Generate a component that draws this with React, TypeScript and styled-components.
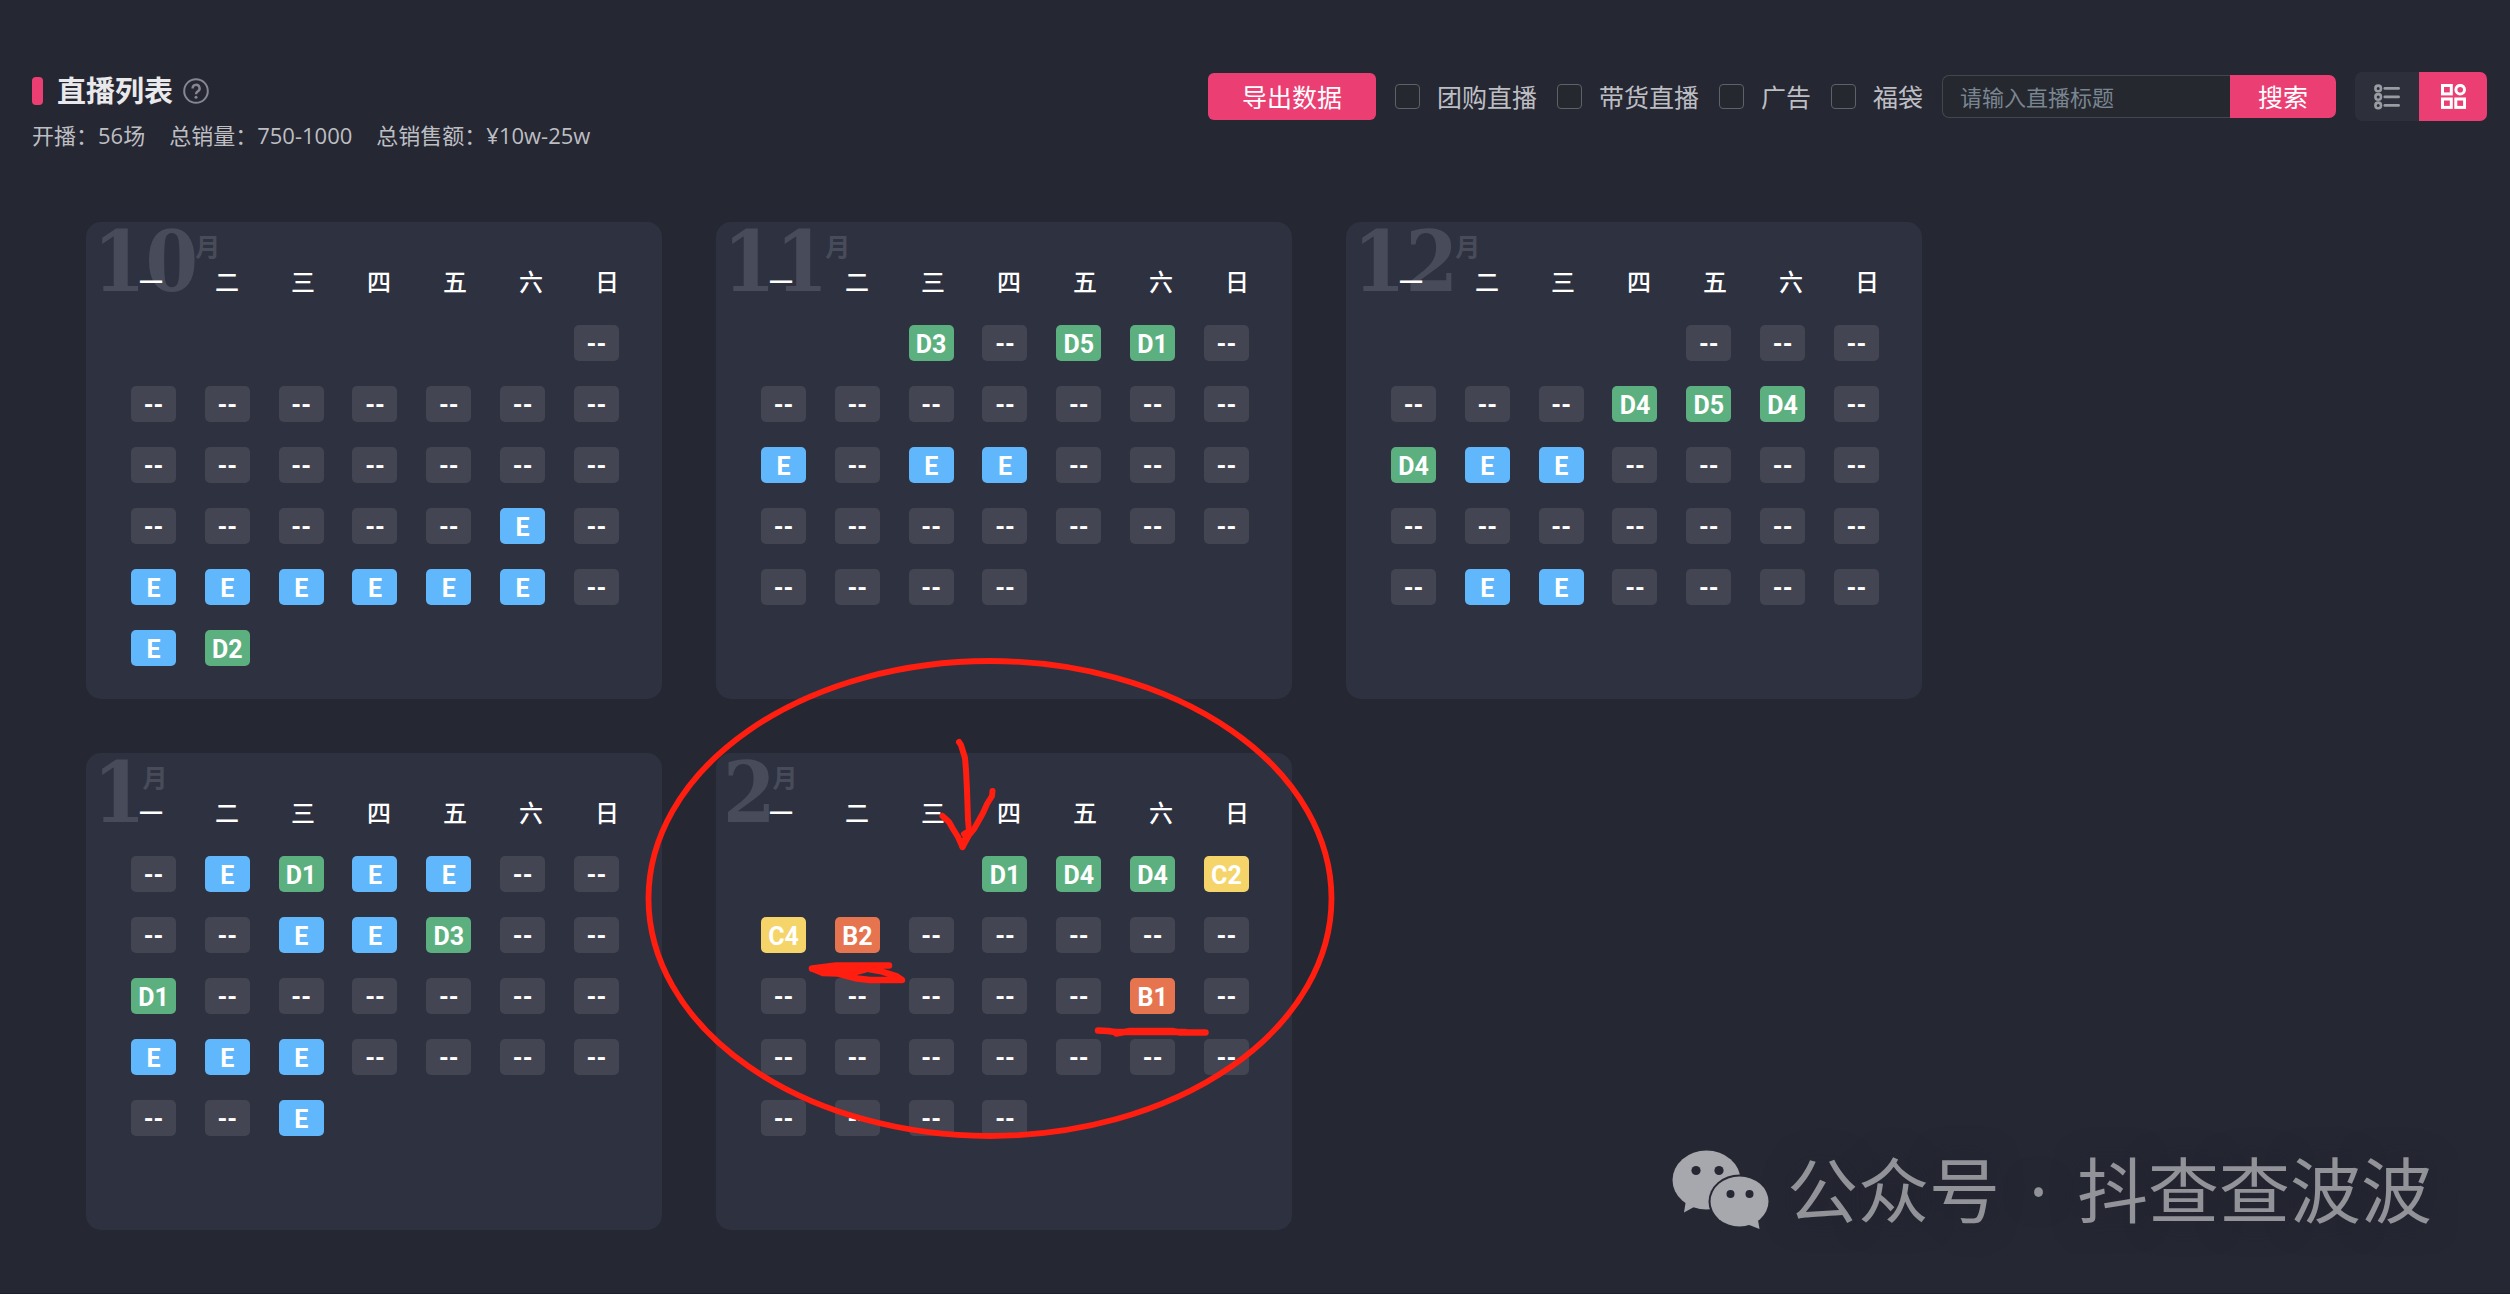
import React from "react";
import styled, { createGlobalStyle } from "styled-components";

const GlobalStyle = createGlobalStyle`
  * { box-sizing: border-box; }
  body {
    margin: 0;
    background: #252733;
    color: #bdbec2;
    font-family: "Open Sans", "Noto Sans CJK SC", sans-serif;
  }
  button, input { font-family: inherit; }
`;

const Page = styled.main`
  position: relative;
  min-height: 100vh;
  padding: 72px 23px 48px 32px;
  border-bottom: 1px solid #1f1f2a;
`;

const Header = styled.header`
  display: flex;
  justify-content: space-between;
  align-items: flex-start;
`;

const TitleRow = styled.div`
  display: flex;
  align-items: center;
  height: 38px;
  &::before {
    content: "";
    width: 11px;
    height: 28px;
    margin-right: 14px;
    border-radius: 4px;
    background: #eb3f73;
  }
`;

const Title = styled.h1`
  margin: 0 10px 0 0;
  color: #e9e9eb;
  font-size: 29px;
  line-height: 38px;
  font-weight: 700;
`;

const Summary = styled.p`
  display: flex;
  gap: 24px;
  margin: 9px 0 0;
  font-size: 22px;
  line-height: 32px;
`;

const Toolbar = styled.form`
  display: flex;
  align-items: center;
  gap: 19px;
`;

const PinkButton = styled.button<{ $width: number; $height: number; $radius: string }>`
  width: ${(p) => p.$width}px;
  height: ${(p) => p.$height}px;
  padding: 0;
  border: 0;
  border-radius: ${(p) => p.$radius};
  background: #eb3f73;
  color: #fff;
  font-size: 25px;
  line-height: 36px;
`;

const Filters = styled.div`
  display: flex;
  gap: 20px;
`;

const Check = styled.label`
  display: flex;
  align-items: center;
  gap: 17px;
  font-size: 25px;
  line-height: 36px;
  input {
    appearance: none;
    width: 25px;
    height: 25px;
    margin: 0;
    border: 1px solid #5f6168;
    border-radius: 4px;
    background: #25282e;
  }
`;

const SearchBox = styled.div`
  display: flex;
  input {
    width: 288px;
    height: 43px;
    padding: 0 17px;
    border: 1px solid #44464e;
    border-right: 0;
    border-radius: 7px 0 0 7px;
    background: #25282e;
    color: #dcdde0;
    font-size: 22px;
    outline: 0;
  }
  input::placeholder { color: #7a8592; opacity: 1; }
`;

const ViewSwitch = styled.div`
  display: flex;
  border-radius: 7px;
  overflow: hidden;
`;

const ViewButton = styled.button<{ $active?: boolean }>`
  display: flex;
  align-items: center;
  justify-content: center;
  width: ${(p) => (p.$active ? 68 : 64)}px;
  height: 49px;
  padding: 0;
  border: 0;
  background: ${(p) => (p.$active ? "#eb3f73" : "#2d303b")};
  color: ${(p) => (p.$active ? "#fff" : "#9b9ca2")};
`;

const Months = styled.section`
  display: flex;
  flex-wrap: wrap;
  gap: 54px;
  max-width: 1944px;
  margin-top: 71px;
  padding-left: 54px;
`;

const Card = styled.article`
  position: relative;
  flex: 0 0 576px;
  height: 477px;
  padding: 42px 43px 0 45px;
  border-radius: 15px;
  background: #2e3140;
`;

const MonthMark = styled.h2`
  position: absolute;
  top: 0;
  left: 7px;
  display: flex;
  align-items: flex-start;
  margin: 0;
  color: #484c5a;
  font-size: 25px;
  line-height: 36px;
  font-weight: 700;
`;

const MonthNumber = styled.span`
  padding-top: 4px;
  font-family: "DejaVu Serif Condensed", "Liberation Serif", serif;
  font-size: 84px;
  line-height: 72px;
`;

const MonthUnit = styled.span`
  margin-left: -3px;
  padding-top: 6px;
`;

const Weekdays = styled.div`
  position: relative;
  display: flex;
  justify-content: space-between;
  padding-left: 8px;
  color: #fff;
  font-size: 24px;
  line-height: 36px;
  font-weight: 500;
`;

const Days = styled.div`
  display: grid;
  grid-template-columns: repeat(7, 45px);
  justify-content: space-between;
  row-gap: 25px;
  margin-top: 25px;
`;

type Tone = "none" | "E" | "D" | "C" | "B";
const toneColor: Record<Tone, string> = {
  none: "#444552",
  E: "#60b7fc",
  D: "#5cb080",
  C: "#f5d469",
  B: "#e5744f",
};

const Day = styled.span<{ $tone: Tone; $start?: number }>`
  grid-column-start: ${(p) => p.$start ?? "auto"};
  height: 36px;
  padding-top: 2px;
  border-radius: 5px;
  background: ${(p) => toneColor[p.$tone]};
  color: #fff;
  font-family: Roboto, sans-serif;
  font-size: 25px;
  line-height: 36px;
  font-weight: 700;
  text-align: center;
`;

const Watermark = styled.aside`
  position: absolute;
  right: 78px;
  bottom: 57px;
  display: flex;
  align-items: center;
  gap: 17px;
  color: #929299;
  font-family: "Noto Sans", "Noto Sans CJK SC", sans-serif;
  font-size: 71px;
  line-height: 92px;
  text-shadow: 0 0 30px #20212c;
`;

const Account = styled.span`
  display: flex;
  gap: 29px;
`;

const Annotation = styled.svg`
  position: absolute;
  left: 640px;
  top: 640px;
  pointer-events: none;
`;

const weekdays = ["一", "二", "三", "四", "五", "六", "日"];

const months = [
  { name: "10", start: 7, days: "- ------- ------- -----E- EEEEEE- E,D2" },
  { name: "11", start: 3, days: "D3,-,D5,D1,- ------- E-EE--- ------- ----" },
  { name: "12", start: 5, days: "--- -,-,-,D4,D5,D4,- D4,E,E,-,-,-,- ------- -EE----" },
  { name: "1", start: 1, days: "-,E,D1,E,E,-,- -,-,E,E,D3,-,- D1,-,-,-,-,-,- EEE---- --E" },
  { name: "2", start: 4, days: "D1,D4,D4,C2 C4,B2,-,-,-,-,- -,-,-,-,-,B1,- ------- ----" },
];

const parseDays = (days: string) =>
  days.split(" ").flatMap((week) => (week.includes(",") ? week.split(",") : week.split("")));

const filters = ["团购直播", "带货直播", "广告", "福袋"];

function HelpIcon() {
  return (
    <svg width="26" height="26" viewBox="0 0 26 26" fill="none" stroke="#85868e" strokeWidth="2">
      <circle cx="13" cy="13" r="11.8" />
      <path d="M9.6 10.4a3.5 3.5 0 1 1 5.2 3c-1.2.7-1.8 1.3-1.8 2.9" strokeWidth="2.4" />
      <circle cx="13" cy="19.3" r="1.5" fill="#85868e" stroke="none" />
    </svg>
  );
}

function ListIcon() {
  return (
    <svg width="26" height="26" viewBox="0 0 26 26" fill="none" stroke="currentColor">
      {[4.4, 12.9, 21.4].map((y) => (
        <g key={y}>
          <circle cx="4.2" cy={y} r="2.8" strokeWidth="2.6" />
          <path d={`M10.8 ${y}H24.6`} strokeWidth="2.7" strokeLinecap="round" />
        </g>
      ))}
    </svg>
  );
}

function GridIcon() {
  return (
    <svg width="25" height="25" viewBox="0 0 25 25" fill="none" stroke="currentColor" strokeWidth="3">
      <rect x="1.5" y="1.5" width="8.8" height="8.4" />
      <circle cx="19.2" cy="5.7" r="4.3" />
      <rect x="1.5" y="15" width="8.8" height="8.4" />
      <rect x="14.8" y="15" width="8.8" height="8.4" />
    </svg>
  );
}

function WechatIcon() {
  return (
    <svg width="98" height="80" viewBox="0 0 98 80" fill="#a7a8ad">
      <ellipse cx="34.5" cy="30" rx="34" ry="29.5" />
      <path d="M14 50L12 62.500L22 57L34 58.500V50Z" />
      <ellipse cx="67.500" cy="51.500" rx="31" ry="27" fill="#252733" />
      <ellipse cx="67.500" cy="51.500" rx="29" ry="25" />
      <path d="M76 74.500L87.500 79L86 70L80 66Z" />
      <g fill="#252733">
        <circle cx="24" cy="20.500" r="4.600" />
        <circle cx="47" cy="20.500" r="4.600" />
        <circle cx="58.500" cy="44" r="4" />
        <circle cx="77.500" cy="44" r="4" />
      </g>
    </svg>
  );
}

function RedMarks() {
  return (
    <Annotation
      width="710"
      height="510"
      viewBox="0 0 710 510"
      fill="none"
      stroke="#ff1e10"
      strokeLinecap="round"
      strokeLinejoin="round"
      aria-hidden="true"
    >
      <ellipse cx="350" cy="258.5" rx="341.5" ry="237.5" strokeWidth="5.8" />
      <path d="M319 102L321 105L325 118L326 130L327 150L328 180L329 191L324 194" strokeWidth="6" />
      <path d="M352.500 151L352 156L347 164L343 173L338 182L334 189L329 195L322.500 207" strokeWidth="6" />
      <path d="M302.500 176L309 182L313 189L318 197L322.500 207L325 199" strokeWidth="6" />
      <path d="M172 328.500L184 327L196 325.500H249M172 328.500L183 333L198 333.500L217 338.500L230 340H262L256 336L240 331L226 328.500H184" strokeWidth="6.500" />
      <path d="M184 327L232 327L226 331L215 334L190 333Z" fill="#ff1e10" strokeWidth="3" />
      <path d="M458 390.500L468 391L475 392L476 393.500L490 391H532L540 392.500H565.500M476 392H545" strokeWidth="6.500" />
    </Annotation>
  );
}

export default function App() {
  return (
    <>
      <GlobalStyle />
      <Page>
        <Header>
          <div>
            <TitleRow>
              <Title>直播列表</Title>
              <HelpIcon />
            </TitleRow>
            <Summary>
              <span>开播：56场</span>
              <span>总销量：750-1000</span>
              <span>总销售额：¥10w-25w</span>
            </Summary>
          </div>
          <Toolbar onSubmit={(e) => e.preventDefault()}>
            <PinkButton type="button" $width={168} $height={47} $radius="6px">导出数据</PinkButton>
            <Filters>
              {filters.map((name) => (
                <Check key={name}>
                  <input type="checkbox" />
                  {name}
                </Check>
              ))}
            </Filters>
            <SearchBox>
              <input type="text" placeholder="请输入直播标题" aria-label="直播标题" />
              <PinkButton type="submit" $width={106} $height={43} $radius="0 7px 7px 0">搜索</PinkButton>
            </SearchBox>
            <ViewSwitch>
              <ViewButton type="button" aria-label="列表"><ListIcon /></ViewButton>
              <ViewButton type="button" aria-label="日历" $active><GridIcon /></ViewButton>
            </ViewSwitch>
          </Toolbar>
        </Header>
        <Months>
          {months.map((month) => (
            <Card key={month.name}>
              <MonthMark>
                <MonthNumber>{month.name}</MonthNumber>
                <MonthUnit>月</MonthUnit>
              </MonthMark>
              <Weekdays>
                {weekdays.map((day) => <span key={day}>{day}</span>)}
              </Weekdays>
              <Days>
                {parseDays(month.days).map((grade, i) => (
                  <Day
                    key={i}
                    $tone={grade === "-" ? "none" : (grade[0] as Tone)}
                    $start={i === 0 ? month.start : undefined}
                  >
                    {grade === "-" ? "--" : grade}
                  </Day>
                ))}
              </Days>
            </Card>
          ))}
        </Months>
        <RedMarks />
        <Watermark>
          <WechatIcon />
          <Account>
            <span>公众号</span>
            <span>·</span>
            <span>抖查查波波</span>
          </Account>
        </Watermark>
      </Page>
    </>
  );
}
